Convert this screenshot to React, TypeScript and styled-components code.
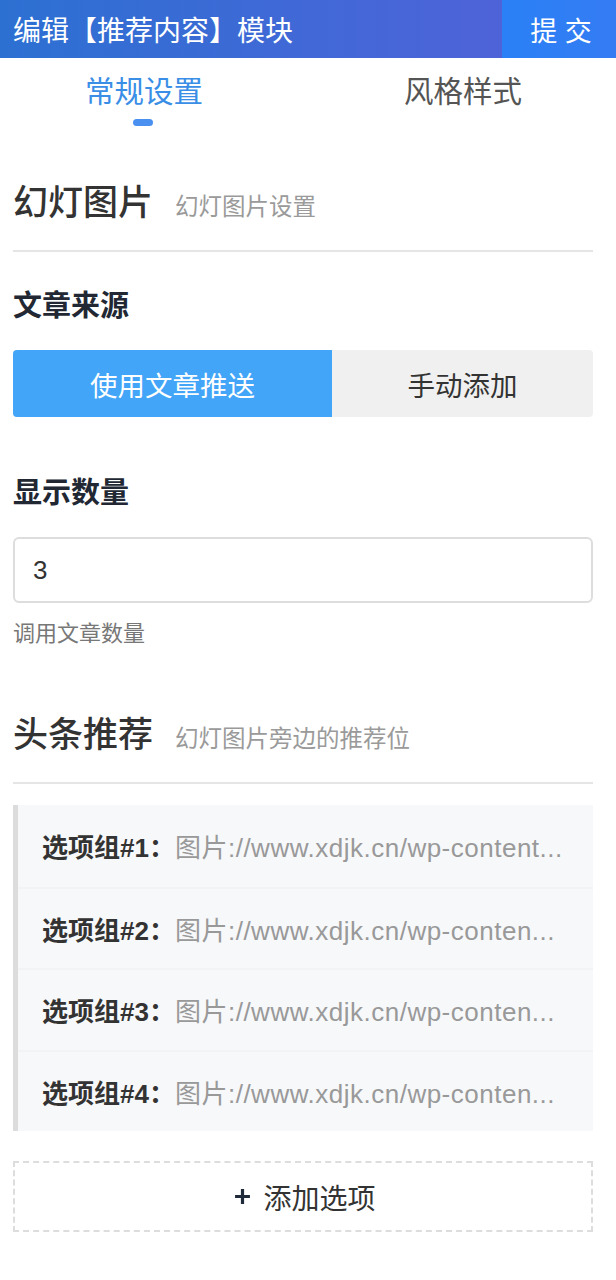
import styled, { createGlobalStyle } from "styled-components";

const GlobalStyle = createGlobalStyle`
  html, body {
    margin: 0;
    padding: 0;
    background: #ffffff;
  }
  body {
    font-family: "Liberation Sans", "Noto Sans CJK SC", sans-serif;
    color: #333;
  }
  * {
    box-sizing: border-box;
  }
`;

interface OptionItem {
  id: number;
  url: string;
}

const OPTIONS: OptionItem[] = [
  { id: 1, url: "图片://www.xdjk.cn/wp-content..." },
  { id: 2, url: "图片://www.xdjk.cn/wp-conten..." },
  { id: 3, url: "图片://www.xdjk.cn/wp-conten..." },
  { id: 4, url: "图片://www.xdjk.cn/wp-conten..." },
];

const App = () => {
  return (
    <>
      <GlobalStyle />
      <Page>
        <Header>
          <HeaderTitle>编辑【推荐内容】模块</HeaderTitle>
          <SubmitButton type="button">提 交</SubmitButton>
        </Header>

        <Tabs>
          <Tab $active>
            常规设置
            <TabBar />
          </Tab>
          <Tab>风格样式</Tab>
        </Tabs>

        <Body>
          <SectionHead $top={40}>
            <SectionTitle>幻灯图片</SectionTitle>
            <SectionSub>幻灯图片设置</SectionSub>
          </SectionHead>

          <Field $top={34}>
            <FieldLabel>文章来源</FieldLabel>
            <Segment>
              <SegmentItem $active>使用文章推送</SegmentItem>
              <SegmentItem>手动添加</SegmentItem>
            </Segment>
          </Field>

          <Field $top={56}>
            <FieldLabel>显示数量</FieldLabel>
            <NumberInput defaultValue="3" />
            <Help>调用文章数量</Help>
          </Field>

          <SectionHead $top={61}>
            <SectionTitle>头条推荐</SectionTitle>
            <SectionSub>幻灯图片旁边的推荐位</SectionSub>
          </SectionHead>

          <OptionList>
            {OPTIONS.map((item) => (
              <OptionRow key={item.id}>
                <OptionLabel>选项组#{item.id}：</OptionLabel>
                <OptionValue>{item.url}</OptionValue>
              </OptionRow>
            ))}
          </OptionList>

          <AddButton type="button">
            <PlusIcon viewBox="0 0 16 16">
              <path d="M8 1v14M1 8h14" stroke="#1f2a3a" strokeWidth="3" />
            </PlusIcon>
            添加选项
          </AddButton>
        </Body>
      </Page>
    </>
  );
};

export default App;

const Page = styled.div`
  width: 616px;
  min-height: 1280px;
  background: #fff;
`;

const Header = styled.div`
  display: flex;
  align-items: stretch;
  height: 58px;
  background: linear-gradient(90deg, #2c70d2 0%, #3f69d6 45%, #5660d9 100%);
`;

const HeaderTitle = styled.div`
  flex: 1;
  display: flex;
  align-items: center;
  padding-left: 13px;
  color: #fff;
  font-size: 28px;
`;

const SubmitButton = styled.button`
  width: 114px;
  border: none;
  background: linear-gradient(90deg, #2a80f6, #357cf3);
  color: #fff;
  font-family: inherit;
  font-size: 27px;
  padding: 0 0 0 4px;
`;

const Tabs = styled.div`
  display: grid;
  grid-template-columns: 288px 1fr;
  height: 80px;
`;

const Tab = styled.div<{ $active?: boolean }>`
  position: relative;
  display: flex;
  justify-content: center;
  padding-top: 14px;
  font-size: 29.5px;
  line-height: 40px;
  color: ${(p) => (p.$active ? "#3a8ee6" : "#555")};
  &:last-child {
    padding-left: 22px;
  }
`;

const TabBar = styled.span`
  position: absolute;
  left: 133px;
  top: 61px;
  width: 20px;
  height: 7px;
  border-radius: 4px;
  background: #4a90f0;
`;

const Body = styled.div`
  padding: 0 23px 0 13px;
`;

const SectionHead = styled.div<{ $top: number }>`
  display: flex;
  align-items: baseline;
  gap: 22px;
  margin-top: ${(p) => p.$top}px;
  padding-bottom: 22px;
  border-bottom: 2px solid #e5e5e5;
`;

const SectionTitle = styled.div`
  font-size: 35px;
  line-height: 50px;
  color: #333;
  font-weight: 500;
`;

const SectionSub = styled.div`
  font-size: 23.5px;
  color: #9a9a9a;
`;

const Field = styled.div<{ $top: number }>`
  display: flex;
  flex-direction: column;
  padding-top: ${(p) => p.$top}px;
`;

const FieldLabel = styled.div`
  font-size: 29px;
  font-weight: 700;
  line-height: 40px;
  color: #222833;
  margin-bottom: 24px;
`;

const Segment = styled.div`
  display: grid;
  grid-template-columns: 319px 1fr;
  height: 67px;
  border-radius: 4px;
  overflow: hidden;
  background: #f0f0f0;
`;

const SegmentItem = styled.div<{ $active?: boolean }>`
  display: flex;
  align-items: center;
  justify-content: center;
  font-size: 27.5px;
  background: ${(p) => (p.$active ? "#42a5f8" : "transparent")};
  color: ${(p) => (p.$active ? "#fff" : "#333")};
`;

const NumberInput = styled.input`
  height: 66px;
  border: 2px solid #ddd;
  border-radius: 6px;
  padding: 0 18px;
  font-family: "Liberation Sans", sans-serif;
  font-size: 26px;
  color: #333;
  outline: none;
`;

const Help = styled.div`
  margin-top: 16px;
  font-size: 22px;
  line-height: 30px;
  color: #777;
`;

const OptionList = styled.div`
  margin-top: 21px;
  border-left: 5px solid #dcdcdc;
`;

const OptionRow = styled.div`
  display: flex;
  align-items: center;
  height: 81.5px;
  padding-left: 24px;
  background: #f7f8f9;
  border-top: 2px solid #f1f3f5;
  white-space: nowrap;
  overflow: hidden;
  &:first-child {
    border-top: none;
  }
`;

const OptionLabel = styled.span`
  font-size: 26px;
  font-weight: 700;
  color: #333;
`;

const OptionValue = styled.span`
  font-size: 26px;
  letter-spacing: 0.5px;
  color: #999;
`;

const AddButton = styled.button`
  display: flex;
  align-items: center;
  justify-content: center;
  gap: 12px;
  width: 100%;
  height: 71px;
  margin-top: 30px;
  border: 2px dashed #ddd;
  background: #fff;
  font-family: inherit;
  font-size: 28px;
  color: #333;
  padding: 0 0 0 4px;
`;

const PlusIcon = styled.svg`
  width: 17px;
  height: 17px;
`;
